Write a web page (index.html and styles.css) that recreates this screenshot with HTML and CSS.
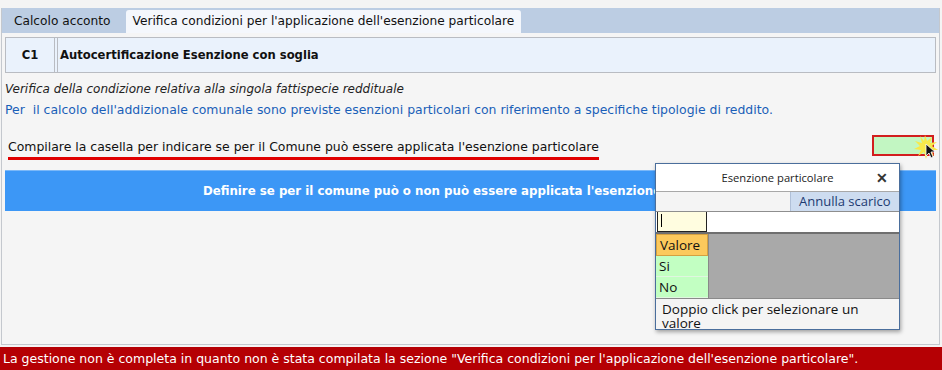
FILE: index.html
```html
<!DOCTYPE html>
<html>
<head>
<meta charset="utf-8">
<link rel="stylesheet" href="styles.css">
</head>
<body>
<div class="page">
  <div class="panel">
    <div class="tabbar">
      <div class="tab">Calcolo acconto</div>
      <div class="tab active">Verifica condizioni per l'applicazione dell'esenzione particolare</div>
    </div>
    <div class="content">
      <div class="header">
        <div class="hcode">C1</div>
        <div class="htitle">Autocertificazione Esenzione con soglia</div>
      </div>
      <p class="italic">Verifica della condizione relativa alla singola fattispecie reddituale</p>
      <p class="info">Per&nbsp; il calcolo dell'addizionale comunale sono previste esenzioni particolari con riferimento a specifiche tipologie di reddito.</p>
      <div class="ask">
        <span class="asktext">Compilare la casella per indicare se per il Comune può essere applicata l'esenzione particolare</span>
        <span class="field"></span>
      </div>
      <div class="bluebar">Definire se per il comune può o non può essere applicata l'esenzione particolare</div>
    </div>
  </div>
  <div class="footer">La gestione non è completa in quanto non è stata compilata la sezione "Verifica condizioni per l'applicazione dell'esenzione particolare".</div>

  <svg class="cursor" width="26" height="26" viewBox="0 0 26 26">
    <polygon points="12,1 14,7 19,3 17,9 24,8 19,12 25,16 18,16 21,22 15,18 13,25 11,18 5,22 8,16 1,15 7,12 2,7 9,9 7,2 11,7" fill="#f7e94a"/>
    <path d="M13 10 L13 22 L16 19 L18 24 L20 23 L18 18 L22 18 Z" fill="#111" stroke="#fff" stroke-width="0.8"/>
  </svg>

  <div class="popup">
    <div class="ptitle">Esenzione particolare<span class="pclose">✕</span></div>
    <div class="ptool"><span class="pbtn">Annulla scarico</span></div>
    <div class="pinput"><span class="pbox"></span></div>
    <div class="pgrid">
      <div class="pcol">
        <div class="pcell head">Valore</div>
        <div class="pcell">Si</div>
        <div class="pcell">No</div>
      </div>
    </div>
    <div class="phint">Doppio click per selezionare un valore</div>
  </div>
</div>
</body>
</html>
```
FILE: styles.css
```css
html, body {
  margin: 0;
  padding: 0;
}
body {
  background: #f4f4f4;
  font-family: "DejaVu Sans", Verdana, sans-serif;
  font-size: 12px;
  color: #111;
  width: 942px;
  height: 370px;
  overflow: hidden;
}
.page {
  position: relative;
  height: 370px;
  display: flex;
  flex-direction: column;
  padding-top: 8px;
  box-sizing: border-box;
}
.panel {
  margin: 0 2px 0 1px;
  border: 1px solid #c4c8ce;
  border-top: none;
  height: 337px;
  box-sizing: border-box;
  background: #f5f5f5;
}
.tabbar {
  background: #bccde3;
  height: 25px;
  display: flex;
  align-items: flex-end;
  padding-left: 2px;
}
.tab {
  height: 23px;
  line-height: 23px;
  padding: 0 9px 0 10px;
  font-size: 12.2px;
  color: #111;
}
.tab.active {
  background: #f4f7fc;
  border-radius: 3px 3px 0 0;
  padding: 0 7px;
  margin-left: 6px;
}
.content {
  padding: 4px 3px 0 3px;
}
.header {
  display: flex;
  height: 34px;
  border: 1px solid #b9bcc2;
  background: #eaf2fc;
  font-weight: bold;
  font-size: 11.6px;
}
.hcode {
  width: 48px;
  border-right: 1px solid #b9bcc2;
  margin-right: 2px;
  display: flex;
  align-items: center;
  justify-content: center;
}
.htitle {
  flex: 1;
  border-left: 1px solid #b9bcc2;
  display: flex;
  align-items: center;
  padding-left: 2px;
}
.italic {
  margin: 9px 0 0 0;
  font-style: italic;
  font-size: 12px;
  line-height: 15px;
  color: #222;
}
.info {
  margin: 5px 0 0 0;
  font-size: 12.45px;
  line-height: 16px;
  color: #1a5fb8;
}
.ask {
  display: flex;
  align-items: flex-start;
  justify-content: space-between;
  margin-top: 17px;
}
.asktext {
  font-size: 12.45px;
  line-height: 16px;
  padding: 4px 0 2px 0;
  border-bottom: 3px solid #e00000;
  margin-left: 3px;
}
.field {
  width: 58px;
  height: 17px;
  border: 2px solid #d21e1e;
  background: #c2f6c2;
  margin-right: 2px;
}
.bluebar {
  margin-top: 10px;
  height: 41px;
  background: #3c97f6;
  border-top: 1px solid #7bb8f8;
  box-sizing: border-box;
  color: #fff;
  font-weight: bold;
  font-size: 11.8px;
  display: flex;
  align-items: center;
  justify-content: center;
  white-space: nowrap;
  overflow: hidden;
}
.footer {
  margin-top: 2px;
  height: 23px;
  background: #b50004;
  color: #fff;
  font-size: 12.5px;
  line-height: 23px;
  padding-left: 3px;
  white-space: nowrap;
}
.cursor {
  position: absolute;
  left: 913px;
  top: 134px;
}
.popup {
  position: absolute;
  left: 655px;
  top: 163px;
  width: 245px;
  height: 167px;
  box-sizing: border-box;
  border: 1px solid #4a6e9c;
  background: #f4f4f4;
  box-shadow: 1px 2px 4px rgba(0, 0, 0, 0.35);
  font-family: "Open Sans", "Noto Sans", sans-serif;
  display: flex;
  flex-direction: column;
}
.ptitle {
  height: 27px;
  background: #fff;
  border-bottom: 1px solid #a8a8a8;
  text-align: center;
  line-height: 27px;
  font-size: 11.2px;
  color: #222;
  position: relative;
}
.pclose {
  position: absolute;
  right: 11px;
  top: 0;
  font-size: 14px;
  font-weight: bold;
  color: #333;
}
.ptool {
  height: 20px;
  display: flex;
  justify-content: flex-end;
  border-bottom: 1px solid #8e8e8e;
}
.pbtn {
  background: #cddcf0;
  border-left: 1px solid #b0c0d8;
  color: #1c3a70;
  font-size: 13px;
  line-height: 19px;
  padding: 0 8px 0 8px;
  width: 92px;
}
.pinput {
  height: 21px;
  background: #fff;
  border-bottom: 2px solid #6f6f6f;
  display: flex;
}
.pbox {
  width: 48px;
  height: 19px;
  margin-left: 1px;
  border: 1px solid #222;
  border-top: none;
  background: #fffde0;
  position: relative;
}
.pbox::before {
  content: "";
  position: absolute;
  left: 3px;
  top: 2px;
  width: 1px;
  height: 13px;
  background: #000;
}
.pgrid {
  height: 64px;
  background: #a9a9a9;
  border-bottom: 1px solid #8a8a8a;
  display: flex;
}
.pcol {
  width: 52px;
  border-right: 1px solid #888;
}
.pcell {
  height: 21px;
  line-height: 21px;
  background: #c2ffc2;
  font-size: 13.5px;
  padding-left: 3px;
  border-bottom: 1px solid #e0f6e0;
  box-sizing: border-box;
}
.pcell.head {
  background: #fcc95c;
  border: 1px solid #d4a040;
  height: 22px;
}
.phint {
  font-size: 13.5px;
  line-height: 14px;
  padding: 3px 30px 0 6px;
  color: #111;
}
```
